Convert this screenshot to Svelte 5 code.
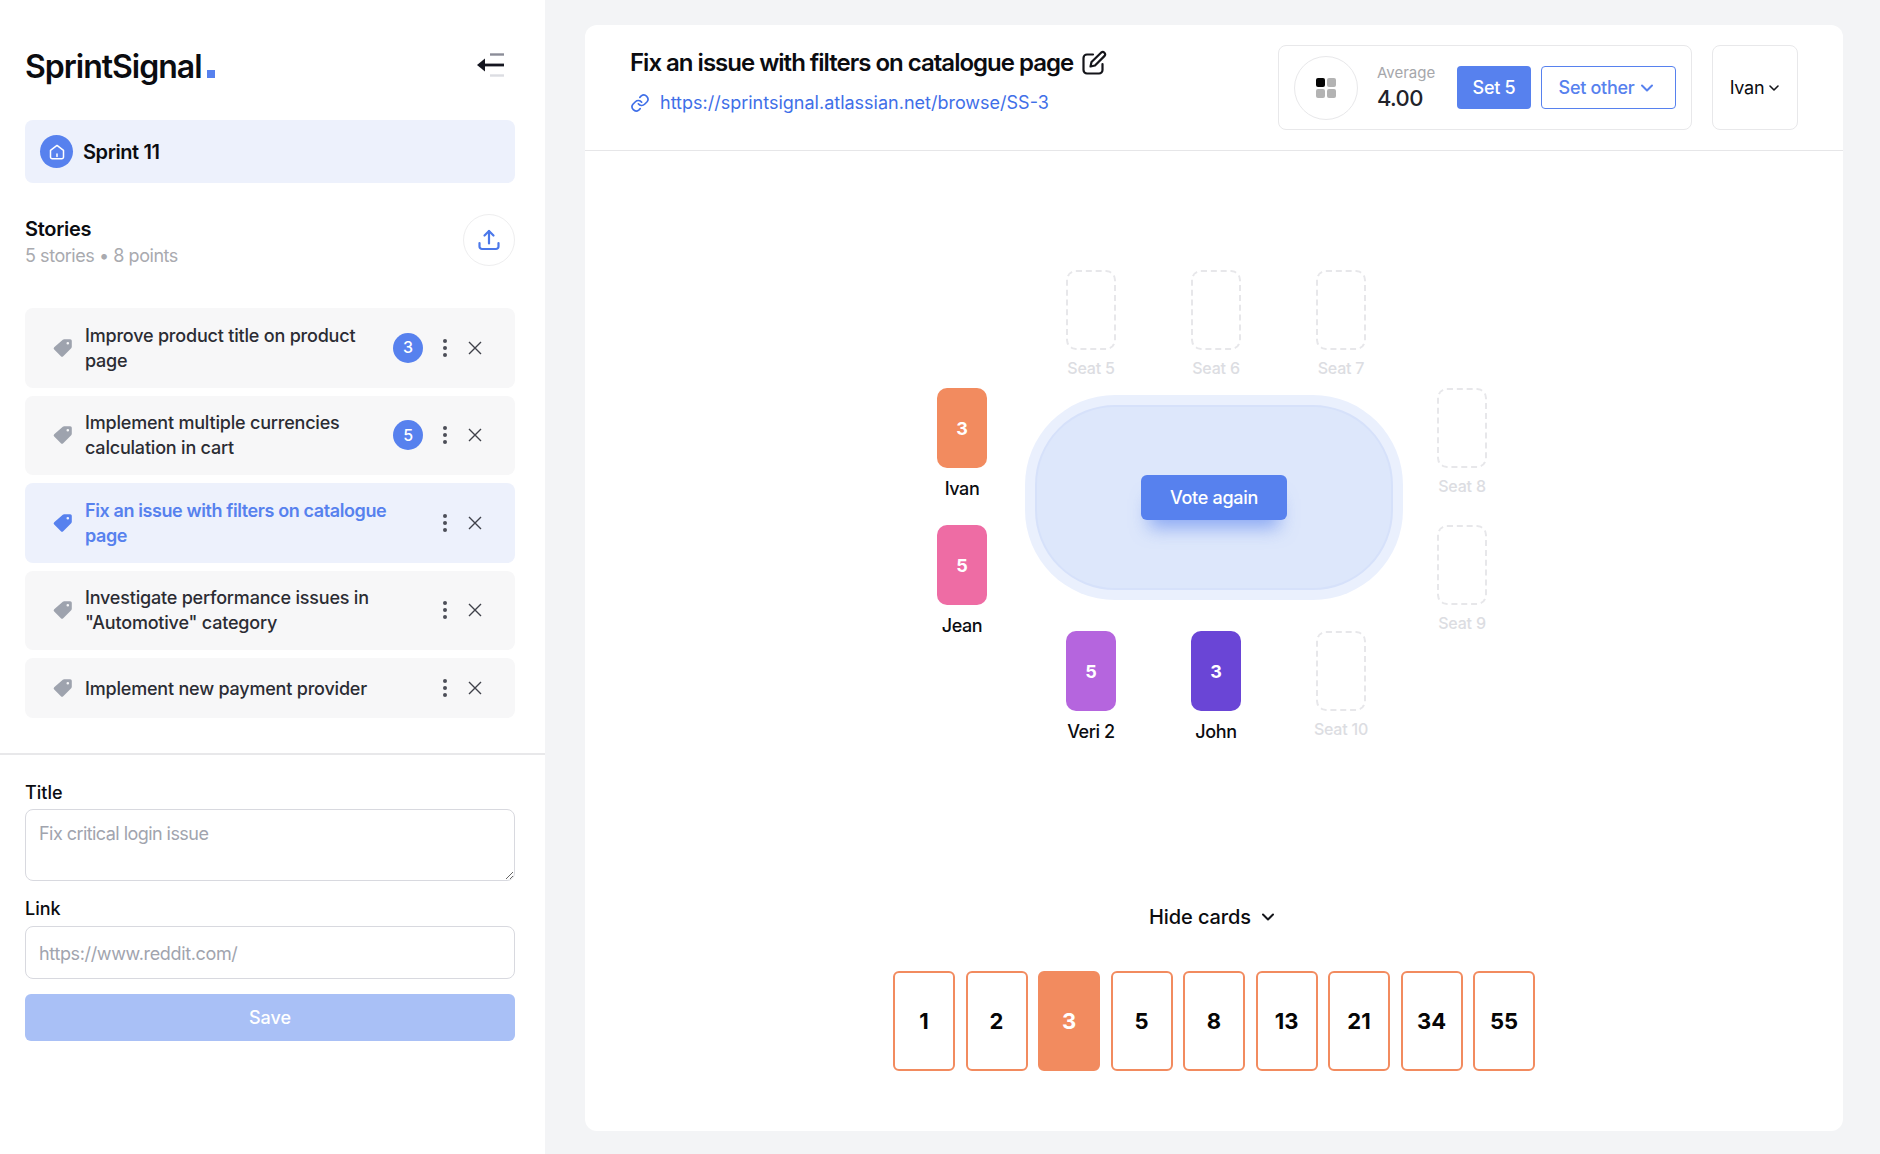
<script>
  const stories = [
    { title: 'Improve product title on product page', badge: 3 },
    { title: 'Implement multiple currencies calculation in cart', badge: 5 },
    { title: 'Fix an issue with filters on catalogue page', active: true },
    { title: 'Investigate performance issues in "Automotive" category' },
    { title: 'Implement new payment provider' }
  ];
  const left = [
    { name: 'Ivan', value: 3, tone: 'orange' },
    { name: 'Jean', value: 5, tone: 'pink' }
  ];
  const right = [{ name: 'Seat 8' }, { name: 'Seat 9' }];
  const top = [{ name: 'Seat 5' }, { name: 'Seat 6' }, { name: 'Seat 7' }];
  const bottom = [
    { name: 'Veri 2', value: 5, tone: 'orchid' },
    { name: 'John', value: 3, tone: 'violet' },
    { name: 'Seat 10' }
  ];
  const cards = [1, 2, 3, 5, 8, 13, 21, 34, 55];
</script>

{#snippet seat(s)}
  <div class="seat">
    {#if s.value}
      <div class="seat-card {s.tone}">{s.value}</div>
      <div class="seat-name">{s.name}</div>
    {:else}
      <div class="seat-card empty"></div>
      <div class="seat-name muted">{s.name}</div>
    {/if}
  </div>
{/snippet}

<div class="app">
  <aside class="sidebar">
    <div class="brand">
      <div class="logo">SprintSignal<span class="dot"></span></div>
      <svg class="collapse" width="30" height="24" viewBox="0 0 30 24" fill="none">
        <path d="M13 1.500h14" stroke="#8b8d98" stroke-width="2.4"/>
        <path d="M13 22.500h14" stroke="#dcdde2" stroke-width="2.4"/>
        <path d="M3 12h24" stroke="#14151f" stroke-width="2.8"/>
        <path d="M0 12l8-6.500v13z" fill="#14151f"/>
      </svg>
    </div>

    <div class="sprint">
      <span class="sprint-icon">
        <svg width="18" height="18" viewBox="0 0 18 18" fill="none" stroke="#fff" stroke-width="1.5" stroke-linejoin="round" stroke-linecap="round">
          <path d="M2.5 7.4 9 2.4l6.500 5v6.600a1.800 1.800 0 0 1-1.800 1.800H4.300a1.800 1.800 0 0 1-1.800-1.800z"/>
          <path d="M9 11v2.500"/>
        </svg>
      </span>
      <span>Sprint 11</span>
    </div>

    <div class="stories-head">
      <div class="stories-text">
        <div class="stories-title">Stories</div>
        <div class="stories-sub">5 stories • 8 points</div>
      </div>
      <button class="upload" aria-label="Upload">
        <svg width="24" height="24" viewBox="0 0 24 24" fill="none" stroke="#4b78ea" stroke-width="2.200" stroke-linecap="round" stroke-linejoin="round">
          <path d="M12 15.500V3"/>
          <path d="M7.500 7.500 12 3l4.500 4.500"/>
          <path d="M2.500 15v3.500a2.500 2.500 0 0 0 2.500 2.500h14a2.500 2.500 0 0 0 2.500-2.500V15"/>
        </svg>
      </button>
    </div>

    <ul class="stories">
      {#each stories as s}
        <li class="story" class:active={s.active}>
          <svg class="tag" width="20" height="20" viewBox="0 0 20 20">
            <path fill-rule="evenodd" d="M11.200 1.200h6a1.600 1.600 0 0 1 1.600 1.600v6a2 2 0 0 1-.6 1.400l-8 8a1.600 1.600 0 0 1-2.300 0L1.200 11.500a1.600 1.600 0 0 1 0-2.300l8.600-7.400a2 2 0 0 1 1.400-.6zM14.800 4a1.300 1.300 0 1 0 0 2.600 1.300 1.300 0 0 0 0-2.600z"/>
          </svg>
          <span class="story-title">{s.title}</span>
          {#if s.badge}<span class="badge">{s.badge}</span>{/if}
          <span class="kebab" aria-hidden="true"><i></i><i></i><i></i></span>
          <svg class="close" width="14" height="14" viewBox="0 0 14 14" fill="none" stroke="#3f414a" stroke-width="1.400">
            <path d="M1 1l12 12M13 1 1 13"/>
          </svg>
        </li>
      {/each}
    </ul>

    <form class="form">
      <label class="field-label" for="title">Title</label>
      <textarea id="title" class="field area" placeholder="Fix critical login issue"></textarea>
      <label class="field-label second" for="link">Link</label>
      <input id="link" class="field line" placeholder="https://www.reddit.com/" />
      <button type="button" class="save">Save</button>
    </form>
  </aside>

  <main class="main">
    <section class="panel">
      <header class="panel-head">
        <div class="issue">
          <div class="issue-title">
            <span>Fix an issue with filters on catalogue page</span>
            <svg width="26" height="26" viewBox="0 0 26 26" fill="none" stroke="#14151a" stroke-width="2.200" stroke-linecap="round" stroke-linejoin="round">
              <path d="M12 4.500H6a3.500 3.500 0 0 0-3.500 3.500v12A3.500 3.500 0 0 0 6 23.500h12a3.500 3.500 0 0 0 3.500-3.500v-6"/>
              <path d="M20.300 2.500a2.400 2.400 0 0 1 3.300 3.400L14 15.500l-4.500 1 1-4.500z"/>
            </svg>
          </div>
          <div class="issue-link">
            <svg width="20" height="20" viewBox="0 0 24 24" fill="none" stroke="#3f6fe8" stroke-width="2" stroke-linecap="round" stroke-linejoin="round">
              <path d="M10 13a5 5 0 0 0 7.500.5l3-3a5 5 0 0 0-7-7l-1.700 1.700"/>
              <path d="M14 11a5 5 0 0 0-7.500-.5l-3 3a5 5 0 0 0 7 7l1.700-1.700"/>
            </svg>
            <span>https://sprintsignal.atlassian.net/browse/SS-3</span>
          </div>
        </div>
        <div class="tools">
          <div class="average">
            <span class="avg-icon" aria-hidden="true"><i class="on"></i><i></i><i></i><i></i></span>
            <div class="avg-text">
              <div class="avg-label">Average</div>
              <div class="avg-value">4.00</div>
            </div>
            <button class="btn solid">Set 5</button>
            <button class="btn outline">Set other
              <svg width="14" height="14" viewBox="0 0 14 14" fill="none" stroke="#5781ee" stroke-width="2" stroke-linecap="round" stroke-linejoin="round"><path d="M2 4.500 7 9.500l5-5"/></svg>
            </button>
          </div>
          <div class="user">Ivan
            <svg width="12" height="12" viewBox="0 0 12 12" fill="none" stroke="#14151a" stroke-width="1.600" stroke-linecap="round" stroke-linejoin="round"><path d="M2 4 6 8l4-4"/></svg>
          </div>
        </div>
      </header>

      <div class="stage">
        <div class="side left">
          {#each left as s}{@render seat(s)}{/each}
        </div>
        <div class="centre">
          <div class="seat-row">
            {#each top as s}{@render seat(s)}{/each}
          </div>
          <div class="table">
            <div class="felt">
              <button class="vote">Vote again</button>
            </div>
          </div>
          <div class="seat-row lower">
            {#each bottom as s}{@render seat(s)}{/each}
          </div>
        </div>
        <div class="side right">
          {#each right as s}{@render seat(s)}{/each}
        </div>
      </div>

      <div class="hand">
        <button class="hide">Hide cards
          <svg width="14" height="14" viewBox="0 0 14 14" fill="none" stroke="#14151a" stroke-width="2" stroke-linecap="round" stroke-linejoin="round"><path d="M2 4.500 7 9.500l5-5"/></svg>
        </button>
        <div class="cards">
          {#each cards as c}
            <button class="card" class:picked={c === 3}>{c}</button>
          {/each}
        </div>
      </div>
    </section>
  </main>
</div>

<style>
  :global(body) {
    margin: 0;
    background: #f3f4f6;
    font-family: Inter, "Noto Sans", sans-serif;
    color: #0b0c10;
  }
  button, input, textarea { font-family: inherit; }
  .app { display: flex; min-height: 1154px; }

  .sidebar {
    width: 545px;
    flex: none;
    box-sizing: border-box;
    background: #fff;
    padding-bottom: 60px;
  }
  .brand {
    height: 120px;
    margin: 0 30px 0 25px;
    display: flex;
    align-items: center;
    justify-content: space-between;
  }
  .logo {
    font-size: 32px;
    font-weight: 600;
    letter-spacing: -1px;
    color: #0b0c10;
    margin-top: 12px;
    display: flex;
    align-items: baseline;
  }
  .dot { width: 8px; height: 8px; background: #5781ee; margin-left: 5px; }
  .collapse { margin: 9px 8px 0 0; }

  .sprint {
    margin: 0 30px 0 25px;
    height: 63px;
    border-radius: 8px;
    background: #edf1fc;
    display: flex;
    align-items: center;
    gap: 10px;
    padding-left: 15px;
    font-size: 20px;
    font-weight: 600;
    letter-spacing: -0.4px;
  }
  .sprint-icon {
    width: 33px;
    height: 33px;
    border-radius: 50%;
    background: #5781ee;
    display: flex;
    align-items: center;
    justify-content: center;
  }

  .stories-head {
    margin: 31px 30px 0 25px;
    height: 52px;
    display: flex;
    align-items: center;
    justify-content: space-between;
  }
  .stories-text { padding-top: 4px; }
  .stories-title { font-size: 20px; font-weight: 600; line-height: 28px; letter-spacing: -0.3px; }
  .stories-sub { font-size: 18px; line-height: 26px; color: #a9aaaf; letter-spacing: -0.45px; }
  .upload {
    width: 52px;
    height: 52px;
    border-radius: 50%;
    border: 1px solid #eeeeef;
    background: #fff;
    padding: 0;
    display: flex;
    align-items: center;
    justify-content: center;
  }

  .stories {
    list-style: none;
    margin: 42px 30px 0 25px;
    padding: 0;
    display: flex;
    flex-direction: column;
    gap: 8px;
  }
  .story {
    min-height: 60px;
    box-sizing: border-box;
    padding: 14.750px 33px 14.750px 28px;
    border-radius: 8px;
    background: #f7f7f8;
    display: flex;
    align-items: center;
    font-size: 18px;
    line-height: 25px;
    font-weight: 500;
    letter-spacing: -0.2px;
    color: #2b2c33;
  }
  .tag { fill: #9ea3ae; margin-right: 12px; flex: none; }
  .story-title { flex: 1; min-width: 0; padding-right: 30px; }
  .badge {
    width: 30px;
    height: 30px;
    border-radius: 50%;
    flex: none;
    background: #5781ee;
    color: #fff;
    font-size: 16px;
    display: flex;
    align-items: center;
    justify-content: center;
    margin-right: 20px;
  }
  .kebab { width: 4px; display: flex; flex-direction: column; gap: 3px; margin-right: 21px; flex: none; }
  .kebab i { width: 4px; height: 4px; border-radius: 50%; background: #4c4e58; }
  .close { flex: none; }
  .story.active { background: #edf1fc; color: #5781ee; font-weight: 600; letter-spacing: -0.4px; }
  .story.active .tag { fill: #5781ee; }

  .form {
    margin-top: 35px;
    border-top: 2px solid #e8e8ea;
    padding: 25px 30px 0 25px;
    display: flex;
    flex-direction: column;
  }
  .field-label { font-size: 18px; line-height: 26px; font-weight: 500; margin-bottom: 3px; }
  .field-label.second { margin-top: 15px; margin-bottom: 4px; }
  .field {
    width: 100%;
    box-sizing: border-box;
    border: 1.500px solid #d8d9df;
    border-radius: 8px;
    background: #fff;
    font-size: 18px;
    padding: 11px 13px;
    outline: none;
  }
  .field::placeholder { color: #a1a4ae; opacity: 1; }
  .area { height: 72px; display: block; line-height: 24px; padding-top: 12px; letter-spacing: -0.55px; }
  .line { height: 53px; padding-top: 13px; letter-spacing: -0.35px; }
  .save {
    margin-top: 15px;
    height: 47px;
    border: 0;
    border-radius: 6px;
    background: #a9c0f6;
    color: #fff;
    font-size: 18px;
    font-weight: 500;
  }

  .main {
    flex: 1;
    padding: 25px 37px 23px 40px;
    display: flex;
  }
  .panel {
    flex: 1;
    background: #fff;
    border-radius: 12px;
    display: flex;
    flex-direction: column;
  }
  .panel-head {
    height: 126px;
    box-sizing: border-box;
    padding: 20px 45px;
    border-bottom: 1px solid #e6e6e8;
    display: flex;
    justify-content: space-between;
    align-items: flex-start;
  }
  .issue-title {
    display: flex;
    align-items: center;
    gap: 8px;
    font-size: 24px;
    line-height: 36px;
    font-weight: 600;
    letter-spacing: -1px;
  }
  .issue-link {
    margin-top: 10px;
    display: flex;
    align-items: center;
    gap: 10px;
    font-size: 18px;
    line-height: 24px;
    color: #3f6fe8;
  }
  .tools { display: flex; gap: 20px; }
  .average {
    width: 414px;
    height: 85px;
    box-sizing: border-box;
    border: 1px solid #e8e8ea;
    border-radius: 8px;
    padding-left: 15px;
    display: flex;
    align-items: center;
  }
  .avg-icon {
    width: 64px;
    height: 64px;
    border-radius: 50%;
    border: 1px solid #e8e8ea;
    box-sizing: border-box;
    display: grid;
    grid-template-columns: 9px 9px;
    grid-auto-rows: 9px;
    gap: 2px;
    align-content: center;
    justify-content: center;
  }
  .avg-icon i { border-radius: 2px; background: #b3b3b3; }
  .avg-icon i.on { background: #050505; }
  .avg-text { margin-left: 19px; width: 80px; }
  .avg-label { font-size: 15px; line-height: 20px; color: #a6a7ab; }
  .avg-value { font-size: 22px; line-height: 30px; font-weight: 500; color: #22232a; letter-spacing: -0.6px; }
  .btn {
    height: 43px;
    border-radius: 4px;
    font-size: 18px;
    font-weight: 500;
    letter-spacing: -0.3px;
    box-sizing: border-box;
    display: flex;
    align-items: center;
    justify-content: center;
    padding: 0;
  }
  .solid { width: 74px; background: #5781ee; border: 0; color: #fff; }
  .outline {
    width: 135px;
    margin-left: 10px;
    gap: 6px;
    padding-right: 4px;
    background: #fff;
    border: 1px solid #5781ee;
    color: #5781ee;
  }
  .user {
    width: 86px;
    height: 85px;
    box-sizing: border-box;
    border: 1px solid #e8e8ea;
    border-radius: 8px;
    display: flex;
    align-items: center;
    justify-content: center;
    gap: 4px;
    font-size: 18px;
    font-weight: 400;
    letter-spacing: -0.3px;
  }

  .stage {
    margin-top: 119px;
    height: 628px;
    padding-right: 4px;
    display: flex;
    justify-content: center;
    align-items: flex-start;
  }
  .side {
    width: 50px;
    margin-top: 118px;
    display: flex;
    flex-direction: column;
    gap: 57px;
  }
  .left { margin-right: 38px; }
  .right { margin-left: 34px; }
  .centre { width: 378px; }
  .seat-row { display: flex; justify-content: center; gap: 75px; height: 125px; margin-left: 4px; }
  .seat-row.lower { margin-top: 31px; height: auto; }
  .seat { width: 50px; height: 80px; display: flex; flex-direction: column; align-items: center; }
  .seat-card {
    width: 50px;
    height: 80px;
    flex: none;
    box-sizing: border-box;
    border-radius: 10px;
    display: flex;
    align-items: center;
    justify-content: center;
    color: #fff;
    font-size: 18px;
    font-weight: 700;
  }
  .seat-card.empty { border: 2px dashed #e7e7ea; }
  .orange { background: #f28b5f; }
  .pink { background: #ee6ca4; }
  .orchid { background: #b565de; }
  .violet { background: #6a45d6; }
  .seat-name {
    margin-top: 9px;
    font-size: 18px;
    line-height: 24px;
    font-weight: 500;
    white-space: nowrap;
    letter-spacing: -0.4px;
  }
  .seat-name.muted { margin-top: 6px; font-size: 16px; font-weight: 500; color: #dcdde2; letter-spacing: -0.2px; }

  .table {
    height: 205px;
    box-sizing: border-box;
    padding: 10px;
    border-radius: 90px;
    background: #eaf0fd;
  }
  .felt {
    height: 100%;
    box-sizing: border-box;
    border: 2px solid #d6e1fa;
    border-radius: 80px;
    background: #dde7fb;
    display: flex;
    align-items: center;
    justify-content: center;
  }
  .vote {
    width: 146px;
    height: 45px;
    border: 0;
    border-radius: 6px;
    background: #5781ee;
    color: #fff;
    font-size: 18px;
    font-weight: 500;
    letter-spacing: -0.3px;
    box-shadow: 0 16px 18px -8px rgba(87, 129, 238, 0.6);
  }

  .hand {
    display: flex;
    flex-direction: column;
    align-items: center;
  }
  .hide {
    background: none;
    border: 0;
    padding: 0;
    height: 38px;
    display: flex;
    align-items: center;
    gap: 10px;
    font-size: 20px;
    font-weight: 500;
    letter-spacing: -0.1px;
    color: #0b0c10;
    margin-right: 4px;
  }
  .cards { margin-top: 35px; display: flex; gap: 10.500px; }
  .card {
    width: 62px;
    height: 100px;
    box-sizing: border-box;
    padding: 0;
    border: 2px solid #f28b5f;
    border-radius: 6px;
    background: #fff;
    color: #050505;
    font-size: 22px;
    font-weight: 700;
  }
  .card.picked { background: #f28b5f; color: #fff; }
</style>
